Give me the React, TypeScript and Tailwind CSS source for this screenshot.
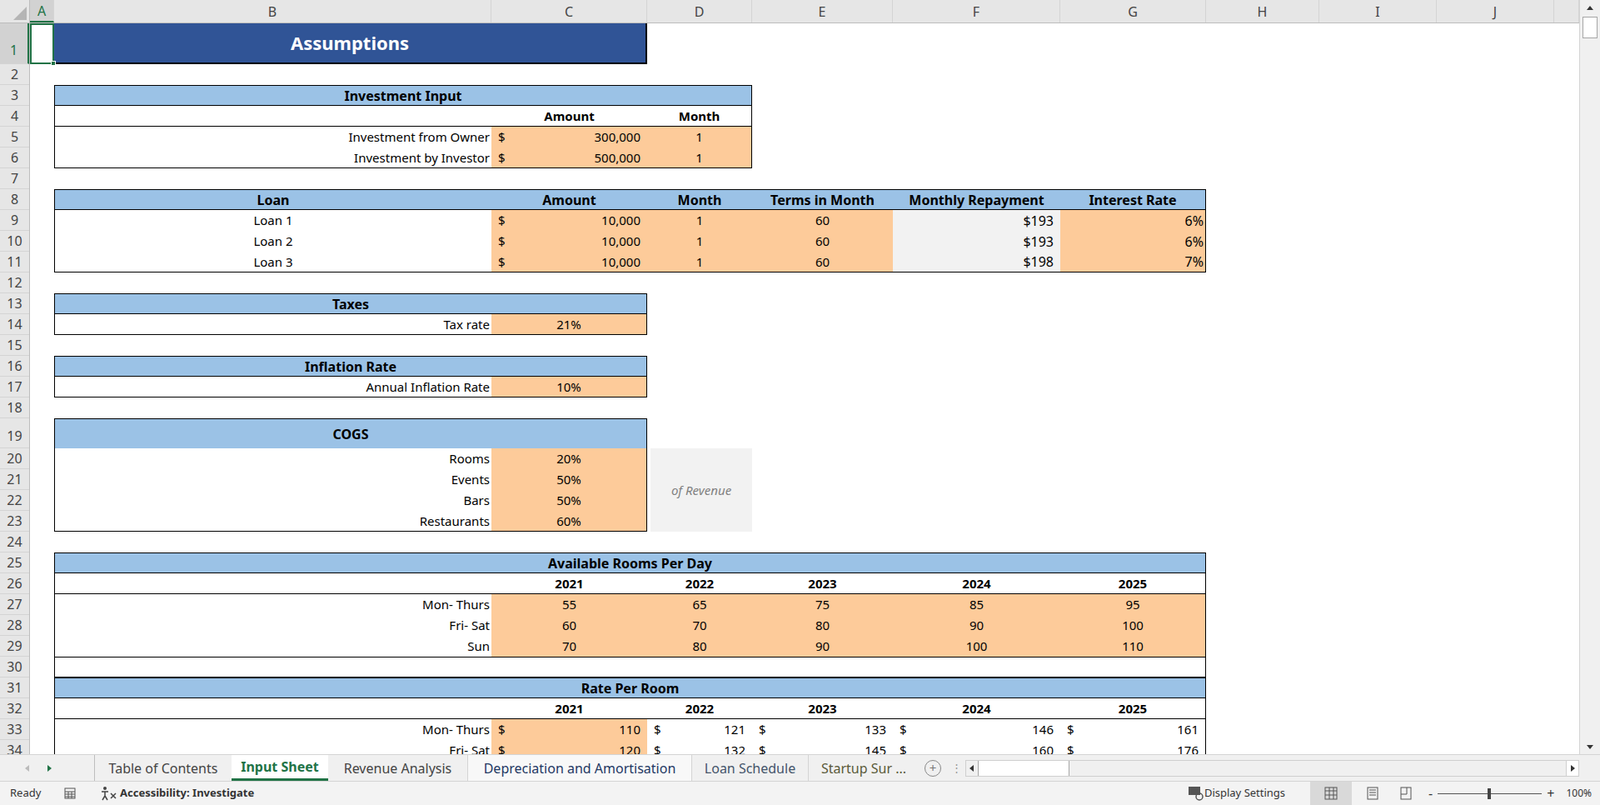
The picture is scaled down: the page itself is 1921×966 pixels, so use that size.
import React from "react";

const OR = "bg-[#FDCB9A]";
const BL = "bg-[#9BC2E6]";

function Tri({ d, c = "#333" }: { d: "l" | "r" | "u" | "d"; c?: string }) {
  const p = { l: "M7 1L2 5L7 9Z", r: "M3 1L8 5L3 9Z", u: "M1 7L5 2L9 7Z", d: "M1 3L5 8L9 3Z" }[d];
  return (
    <svg width="10" height="10" viewBox="0 0 10 10">
      <path d={p} fill={c} />
    </svg>
  );
}

function Dollar({ v, bg }: { v: string; bg: string }) {
  return (
    <div className={`${bg} flex items-center justify-between px-2`}>
      <span>$</span>
      <span>{v}</span>
    </div>
  );
}

function C({ c = "", children }: { c?: string; children?: React.ReactNode }) {
  return <div className={`flex items-center ${c}`}>{children}</div>;
}

const colHeads: [string, string][] = [
  ["A", "w-[29px]"],
  ["B", "w-[525px]"],
  ["C", "w-[187px]"],
  ["D", "w-[126px]"],
  ["E", "w-[169px]"],
  ["F", "w-[201px]"],
  ["G", "w-[175px]"],
  ["H", "w-[136px]"],
  ["I", "w-[141px]"],
  ["J", "w-[141px]"],
  ["", "flex-1"],
];

const rows = Array.from({ length: 34 }, (_, i) => i + 1);

export default function App() {
  return (
    <div className="w-[1921px] h-[966px] overflow-hidden bg-white font-['Open_Sans',sans-serif] text-[15px] text-black flex flex-col">
      <div className="flex h-[905px]">
        <div className="flex-1 flex flex-col overflow-hidden">
          <div className="flex h-[28px] shrink-0 bg-[#E6E6E6] border-b border-[#BDBDBD] text-[#444] text-[16px] font-['Liberation_Sans',sans-serif]">
            <div className="w-[36px] border-r border-[#BDBDBD] relative">
              <div className="absolute right-[3px] bottom-[3px] w-0 h-0 border-l-[16px] border-l-transparent border-b-[16px] border-b-[#B5B5B5]" />
            </div>
            {colHeads.map(([n, w]) => (
              <div
                key={n + w}
                className={`${w} shrink-0 flex items-center justify-center border-r border-[#D4D4D4] ${
                  n === "A" ? "bg-[#D2D2D2] text-[#217346] border-b-2 border-b-[#217346]" : ""
                }`}
              >
                {n}
              </div>
            ))}
          </div>
          <div className="flex flex-1 overflow-hidden">
            <div className="w-[36px] shrink-0 flex flex-col bg-[#E6E6E6] border-r border-[#BDBDBD] text-[#444] text-[16px] font-['Liberation_Sans',sans-serif]">
              {rows.map((r) => (
                <div
                  key={r}
                  className={`shrink-0 flex justify-center border-b border-[#D4D4D4] ${
                    r === 1
                      ? "h-[49px] items-end pb-1 bg-[#D2D2D2] text-[#217346] border-r-2 border-r-[#217346]"
                      : r === 19
                      ? "h-[36px] items-end pb-0.5"
                      : "h-[25px] items-center"
                  }`}
                >
                  {r}
                </div>
              ))}
            </div>
            <div className="flex-1 grid grid-cols-[29px_525px_187px_126px_169px_201px_175px_136px_141px_141px_1fr] grid-rows-[49px_repeat(17,25px)_36px_repeat(15,25px)]">
              <div className="col-start-1 row-start-1 border-2 border-[#217346] relative">
                <div className="absolute -right-[4px] -bottom-[4px] w-[6px] h-[6px] bg-[#217346] border border-white" />
              </div>
              <div className="col-start-2 col-end-4 row-start-1 bg-[#305496] border-r-2 border-b-2 border-black flex items-center justify-center text-white font-bold text-[22px]">
                Assumptions
              </div>

              <div className="col-start-2 col-end-5 row-start-3 row-end-7 grid grid-cols-subgrid grid-rows-subgrid border border-black">
                <C c={`col-span-3 ${BL} justify-center font-bold text-[16px] border-b border-black`}>Investment Input</C>
                <C c="border-b border-black" />
                <C c="justify-center font-bold border-b border-black">Amount</C>
                <C c="justify-center font-bold border-b border-black">Month</C>
                <C c="justify-end pr-0.5">Investment from Owner</C>
                <Dollar v="300,000" bg={OR} />
                <C c={`${OR} justify-center`}>1</C>
                <C c="justify-end pr-0.5">Investment by Investor</C>
                <Dollar v="500,000" bg={OR} />
                <C c={`${OR} justify-center`}>1</C>
              </div>

              <div className="col-start-2 col-end-8 row-start-8 row-end-12 grid grid-cols-subgrid grid-rows-subgrid border border-black">
                {["Loan", "Amount", "Month", "Terms in Month", "Monthly Repayment", "Interest Rate"].map((h) => (
                  <C key={h} c={`${BL} justify-center font-bold text-[16px] border-b border-black`}>
                    {h}
                  </C>
                ))}
                {[
                  ["Loan 1", "$193", "6%"],
                  ["Loan 2", "$193", "6%"],
                  ["Loan 3", "$198", "7%"],
                ].map(([l, m, p]) => (
                  <React.Fragment key={l}>
                    <C c="justify-center">{l}</C>
                    <Dollar v="10,000" bg={OR} />
                    <C c={`${OR} justify-center`}>1</C>
                    <C c={`${OR} justify-center`}>60</C>
                    <C c="bg-[#F2F2F2] justify-end pr-2 text-[16px]">{m}</C>
                    <C c={`${OR} justify-end pr-0.5 text-[16px]`}>{p}</C>
                  </React.Fragment>
                ))}
              </div>

              <div className="col-start-2 col-end-4 row-start-13 row-end-15 grid grid-cols-subgrid grid-rows-subgrid border border-black">
                <C c={`col-span-2 ${BL} justify-center font-bold text-[16px] border-b border-black`}>Taxes</C>
                <C c="justify-end pr-0.5">Tax rate</C>
                <C c={`${OR} justify-center`}>21%</C>
              </div>

              <div className="col-start-2 col-end-4 row-start-16 row-end-18 grid grid-cols-subgrid grid-rows-subgrid border border-black">
                <C c={`col-span-2 ${BL} justify-center font-bold text-[16px] border-b border-black`}>Inflation Rate</C>
                <C c="justify-end pr-0.5">Annual Inflation Rate</C>
                <C c={`${OR} justify-center`}>10%</C>
              </div>

              <div className="col-start-2 col-end-4 row-start-19 row-end-24 grid grid-cols-subgrid grid-rows-subgrid border border-black">
                <C c={`col-span-2 ${BL} justify-center font-bold text-[16px]`}>COGS</C>
                {[
                  ["Rooms", "20%"],
                  ["Events", "50%"],
                  ["Bars", "50%"],
                  ["Restaurants", "60%"],
                ].map(([l, v]) => (
                  <React.Fragment key={l}>
                    <C c="justify-end pr-0.5">{l}</C>
                    <C c={`${OR} justify-center`}>{v}</C>
                  </React.Fragment>
                ))}
              </div>
              <div className="col-start-4 row-start-20 row-end-24 ml-[4px] bg-[#F2F2F2] flex items-center justify-center italic text-[#808080]">
                of Revenue
              </div>

              <div className="col-start-2 col-end-8 row-start-25 row-end-31 grid grid-cols-subgrid grid-rows-subgrid border border-black">
                <C c={`col-span-6 ${BL} justify-center font-bold text-[16px] border-b border-black`}>Available Rooms Per Day</C>
                <C c="border-b border-black" />
                {["2021", "2022", "2023", "2024", "2025"].map((y) => (
                  <C key={y} c="justify-center font-bold border-b border-black">
                    {y}
                  </C>
                ))}
                {[
                  ["Mon- Thurs", "55", "65", "75", "85", "95"],
                  ["Fri- Sat", "60", "70", "80", "90", "100"],
                  ["Sun", "70", "80", "90", "100", "110"],
                ].map(([l, ...vs]) => (
                  <React.Fragment key={l}>
                    <C c="justify-end pr-0.5">{l}</C>
                    {vs.map((v, i) => (
                      <C key={i} c={`${OR} justify-center`}>
                        {v}
                      </C>
                    ))}
                  </React.Fragment>
                ))}
                <C c="col-span-6 border-t border-black" />
              </div>

              <div className="col-start-2 col-end-8 row-start-31 row-end-35 grid grid-cols-subgrid grid-rows-subgrid border-x border-t border-black">
                <C c={`col-span-6 ${BL} justify-center font-bold text-[16px] border-b border-black`}>Rate Per Room</C>
                <C c="border-b border-black" />
                {["2021", "2022", "2023", "2024", "2025"].map((y) => (
                  <C key={y} c="justify-center font-bold border-b border-black">
                    {y}
                  </C>
                ))}
                {[
                  ["Mon- Thurs", "110", "121", "133", "146", "161"],
                  ["Fri- Sat", "120", "132", "145", "160", "176"],
                ].map(([l, ...vs]) => (
                  <React.Fragment key={l}>
                    <C c="justify-end pr-0.5">{l}</C>
                    {vs.map((v, i) => (
                      <Dollar key={i} v={v} bg={i === 0 ? OR : ""} />
                    ))}
                  </React.Fragment>
                ))}
              </div>
            </div>
          </div>
        </div>
        <div className="w-[25px] shrink-0 bg-[#F0F0F0] border-l border-[#D4D4D4] flex flex-col items-center">
          <div className="h-[12px] flex items-center mt-[4px]">
            <Tri d="u" />
          </div>
          <div className="w-[18px] h-[26px] bg-white border border-[#A6A6A6] mt-[4px]" />
          <div className="flex-1" />
          <div className="h-[14px] flex items-center mb-[2px]">
            <Tri d="d" />
          </div>
        </div>
      </div>

      <div className="h-[32px] shrink-0 bg-[#F0F0F0] border-t border-[#D4D4D4] flex items-stretch text-[16px] font-['Liberation_Sans',sans-serif] text-[#444]">
        <div className="w-[113px] flex items-center gap-4 pl-7">
          <Tri d="l" c="#BBB" />
          <Tri d="r" c="#217346" />
        </div>
        <div className="w-[165px] flex items-center justify-center border-l border-[#BDBDBD]">Table of Contents</div>
        <div className="w-[116px] flex items-center justify-center bg-white text-[#217346] font-bold border-b-[3px] border-[#217346]">Input Sheet</div>
        <div className="w-[167px] flex items-center justify-center">Revenue Analysis</div>
        <div className="w-[270px] flex items-center justify-center bg-[#F8F8F8] text-[#1F3864] border-x border-[#D4D4D4]">Depreciation and Amortisation</div>
        <div className="w-[140px] flex items-center justify-center text-[#44546A] border-r border-[#D4D4D4]">Loan Schedule</div>
        <div className="w-[132px] flex items-center justify-center text-[#5A5A3A]">Startup Sur ...</div>
        <div className="w-[34px] flex items-center justify-center">
          <div className="w-[20px] h-[20px] rounded-full border border-[#888] flex items-center justify-center text-[15px] text-[#777] leading-none">+</div>
        </div>
        <div className="w-[22px] flex items-center justify-center text-[#999] text-[13px]">⋮</div>
        <div className="flex-1 flex items-center">
          <div className="flex-1 h-[20px] bg-[#F0F0F0] border border-[#CFCFCF] flex items-center">
            <span className="px-0.5 flex items-center">
              <Tri d="l" />
            </span>
            <div className="w-[110px] h-[18px] bg-white border-x border-[#A6A6A6]" />
            <div className="flex-1" />
            <span className="px-0.5 h-full flex items-center bg-white border-l border-[#CFCFCF]">
              <Tri d="r" />
            </span>
          </div>
          <div className="w-[25px]" />
        </div>
      </div>

      <div className="h-[29px] shrink-0 bg-[#F3F3F3] border-t border-[#D4D4D4] flex items-center text-[13px] text-[#333] font-['Liberation_Sans',sans-serif]">
        <span className="pl-[12px] w-[72px]">Ready</span>
        <svg width="16" height="16" viewBox="0 0 16 16" className="ml-[4px]">
          <rect x="2" y="2" width="12" height="12" fill="none" stroke="#555" />
          <path d="M2 6h12M2 9h12M2 12h12M6 6v8M10 6v8" stroke="#555" />
        </svg>
        <svg width="22" height="18" viewBox="0 0 22 18" className="ml-[28px]">
          <circle cx="6" cy="3" r="2" fill="#444" />
          <path d="M2 7h8M6 7v5l-3 5M6 12l3 5" stroke="#444" strokeWidth="1.5" fill="none" />
          <path d="M13 9l6 6M19 9l-6 6" stroke="#444" strokeWidth="1.5" />
        </svg>
        <span className="font-bold ml-[2px]">Accessibility: Investigate</span>
        <div className="flex-1" />
        <svg width="20" height="18" viewBox="0 0 20 18">
          <rect x="1" y="1" width="14" height="10" fill="#555" />
          <circle cx="14" cy="13" r="4" fill="none" stroke="#555" strokeWidth="1.5" />
        </svg>
        <span className="mr-[30px]">Display Settings</span>
        <div className="w-[50px] h-full bg-[#D9D9D9] flex items-center justify-center">
          <svg width="16" height="16" viewBox="0 0 16 16">
            <rect x="1" y="1" width="14" height="14" fill="none" stroke="#555" />
            <path d="M1 5h14M1 10h14M6 1v14M11 1v14" stroke="#555" />
          </svg>
        </div>
        <div className="w-[50px] flex justify-center">
          <svg width="16" height="16" viewBox="0 0 16 16">
            <rect x="2" y="1" width="12" height="14" fill="none" stroke="#555" />
            <path d="M4 4h8M4 7h8M4 10h8" stroke="#555" />
          </svg>
        </div>
        <div className="w-[30px] flex justify-center">
          <svg width="16" height="16" viewBox="0 0 16 16">
            <rect x="2" y="1" width="12" height="14" fill="none" stroke="#555" />
            <path d="M2 9h7V1" stroke="#555" fill="none" />
          </svg>
        </div>
        <span className="ml-[12px] text-[16px]">-</span>
        <div className="w-[125px] h-[1px] bg-[#555] mx-[6px] relative">
          <div className="absolute left-[60px] -top-[6px] w-[4px] h-[13px] bg-[#444]" />
        </div>
        <span className="text-[16px]">+</span>
        <span className="ml-[14px] mr-[10px] text-[12px]">100%</span>
      </div>
    </div>
  );
}
